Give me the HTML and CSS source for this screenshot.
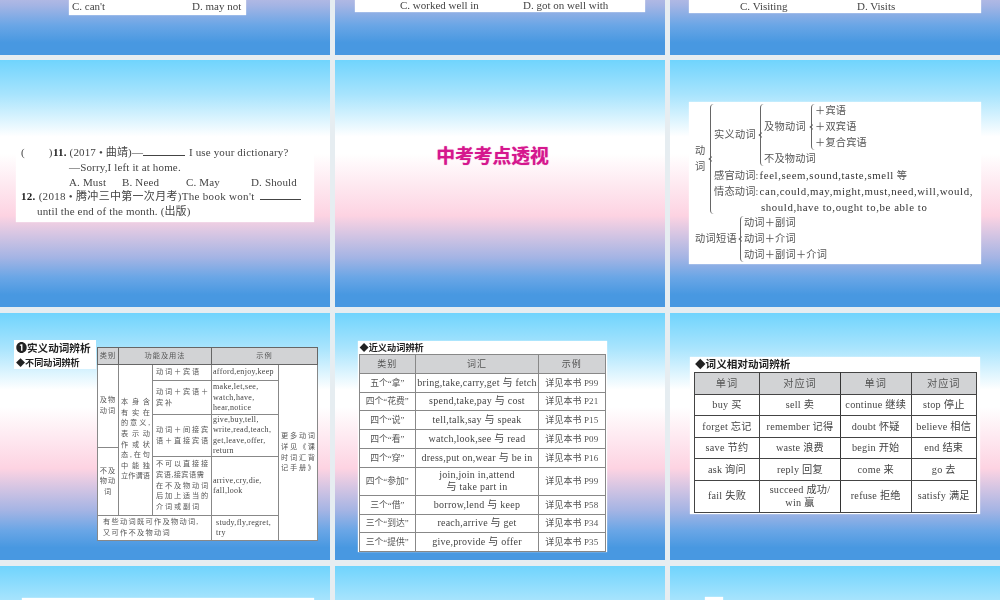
FILE: index.html
```html
<!DOCTYPE html>
<html lang="zh">
<head>
<meta charset="utf-8">
<title>动词</title>
<link rel="stylesheet" href="styles.css">
</head>
<body>
<main class="deck">
  <section class="slide end"><div class="sheet s1 opts"><span class="o1a">C. can't</span><span>D. may not</span></div></section>
  <section class="slide end"><div class="sheet s2 opts"><span class="o2a">C. worked well in</span><span>D. got on well with</span></div></section>
  <section class="slide end"><div class="sheet s3 opts"><span class="o3a">C. Visiting</span><span>D. Visits</span></div></section>

  <section class="slide mid">
    <div class="sheet quiz">
      <p class="q"><span class="paren">(<i class="gap"></i>)</span><b>11.</b><span>(2017 • 曲靖)—<u class="blank b1"></u> I use your dictionary?</span></p>
      <p class="q in1">—Sorry,I left it at home.</p>
      <p class="q in1 choices"><span class="c1">A. Must</span><span class="c2">B. Need</span><span class="c3">C. May</span><span>D. Should</span></p>
      <p class="q q4"><b>12.</b><span>(2018 • 腾冲三中第一次月考)The book won't <u class="blank b2"></u></span></p>
      <p class="q in2">until the end of the month. (出版)</p>
    </div>
  </section>
  <section class="slide mid"><h1 class="title">中考考点透视</h1></section>
  <section class="slide mid">
    <div class="sheet tree">
      <div class="branch">
        <div class="vert">动<br>词</div>
        <i class="brace b-main"></i>
        <div class="stack">
          <div class="branch">
            <div class="lab w-shi">实义动词</div>
            <i class="brace"></i>
            <div class="stack">
              <div class="branch">
                <div class="lab w-ji">及物动词</div>
                <i class="brace"></i>
                <div class="stack"><div class="ln">＋宾语</div><div class="ln">＋双宾语</div><div class="ln">＋复合宾语</div></div>
              </div>
              <div class="ln">不及物动词</div>
            </div>
          </div>
          <div class="ln">感官动词:<span class="w">feel,seem,sound,taste,smell</span> 等</div>
          <div class="ln">情态动词:<span class="w">can,could,may,might,must,need,will,would,</span></div>
          <div class="ln ind"><span class="w">should,have to,ought to,be able to</span></div>
        </div>
      </div>
      <div class="branch">
        <div class="lab">动词短语</div>
        <i class="brace"></i>
        <div class="stack"><div class="ln">动词＋副词</div><div class="ln">动词＋介词</div><div class="ln">动词＋副词＋介词</div></div>
      </div>
    </div>
  </section>

  <section class="slide row7">
    <div class="tag t7"><div class="tag-a"><span class="num">❶</span>实义动词辨析</div><div class="tag-b">◆不同动词辨析</div></div>
    <table class="tb tb7">
      <colgroup><col class="a1"><col class="a2"><col class="a3"><col class="a4"><col class="a5"></colgroup>
      <tr class="head r0"><th>类别</th><th colspan="2">功能及用法</th><th colspan="2">示例</th></tr>
      <tr class="r1"><td rowspan="3" class="cn">及物<br>动词</td><td rowspan="5" class="jus">本身含<br>有实在<br>的意义,<br>表示动<br>作或状<br>态,在句<br>中能独<br>立作谓语</td><td class="spr">动词＋宾语</td><td class="en">afford,enjoy,keep</td><td rowspan="6" class="jus">更多动词<br>详见《课<br>时词汇背<br>记手册》</td></tr>
      <tr class="r2"><td class="spr">动词＋宾语＋<br>宾补</td><td class="en">make,let,see,<br>watch,have,<br>hear,notice</td></tr>
      <tr class="r3"><td rowspan="2" class="spr">动词＋间接宾<br>语＋直接宾语</td><td rowspan="2" class="en">give,buy,tell,<br>write,read,teach,<br>get,leave,offer,<br>return</td></tr>
      <tr class="r3b"><td rowspan="2" class="cn">不及<br>物动<br>词</td></tr>
      <tr class="r4"><td class="spr">不可以直接接<br><span class="tight">宾语,接宾语需</span><br>在不及物动词<br>后加上适当的<br>介词或副词</td><td class="en">arrive,cry,die,<br>fall,look</td></tr>
      <tr class="r5"><td colspan="3" class="spr pad">有些动词既可作及物动词,<br>又可作不及物动词</td><td class="en pad">study,fly,regret,<br>try</td></tr>
    </table>
  </section>

  <section class="slide mid">
    <div class="sheet sheet8">
      <div class="tag-b tag8">◆近义动词辨析</div>
      <table class="tb tb8">
        <colgroup><col class="b1c"><col class="b2c"><col class="b3c"></colgroup>
        <tr class="head"><th>类别</th><th>词汇</th><th>示例</th></tr>
        <tr><td>五个“拿”</td><td>bring,take,carry,get 与 fetch</td><td>详见本书 P99</td></tr>
        <tr><td>四个“花费”</td><td>spend,take,pay 与 cost</td><td>详见本书 P21</td></tr>
        <tr><td>四个“说”</td><td>tell,talk,say 与 speak</td><td>详见本书 P15</td></tr>
        <tr><td>四个“看”</td><td>watch,look,see 与 read</td><td>详见本书 P09</td></tr>
        <tr><td>四个“穿”</td><td>dress,put on,wear 与 be in</td><td>详见本书 P16</td></tr>
        <tr class="tall"><td>四个“参加”</td><td>join,join in,attend<br>与 take part in</td><td>详见本书 P99</td></tr>
        <tr><td>三个“借”</td><td>borrow,lend 与 keep</td><td>详见本书 P58</td></tr>
        <tr><td>三个“到达”</td><td>reach,arrive 与 get</td><td>详见本书 P34</td></tr>
        <tr><td>三个“提供”</td><td>give,provide 与 offer</td><td>详见本书 P35</td></tr>
      </table>
    </div>
  </section>

  <section class="slide mid">
    <div class="sheet sheet9">
      <div class="tag-b tag9">◆词义相对动词辨析</div>
      <table class="tb tb9">
        <colgroup><col class="c1c"><col class="c2c"><col class="c3c"><col class="c4c"></colgroup>
        <tr class="head"><th>单词</th><th class="mid-line">对应词</th><th>单词</th><th>对应词</th></tr>
        <tr><td>buy 买</td><td class="mid-line">sell 卖</td><td>continue 继续</td><td>stop 停止</td></tr>
        <tr><td>forget 忘记</td><td class="mid-line">remember 记得</td><td>doubt 怀疑</td><td>believe 相信</td></tr>
        <tr><td>save 节约</td><td class="mid-line">waste 浪费</td><td>begin 开始</td><td>end 结束</td></tr>
        <tr><td>ask 询问</td><td class="mid-line">reply 回复</td><td>come 来</td><td>go 去</td></tr>
        <tr class="tall9"><td>fail 失败</td><td class="mid-line">succeed 成功/<br>win 赢</td><td>refuse 拒绝</td><td>satisfy 满足</td></tr>
      </table>
    </div>
  </section>

  <section class="slide"><div class="sheet peek1"></div></section>
  <section class="slide"></section>
  <section class="slide"><div class="sheet peek3"></div></section>
</main>
</body>
</html>
```
FILE: styles.css
```css
* { box-sizing: border-box; }
html, body { margin: 0; height: 600px; overflow: hidden; background: #e6edf1; }
body { font-family: "Liberation Serif", "Noto Sans CJK SC", serif; color: #333; }
p, h1 { margin: 0; }

.deck {
  display: grid;
  grid-template-columns: repeat(3, 330px);
  grid-auto-rows: 247.3px;
  gap: 5.5px 5px;
  margin-top: -192.8px;
}
.slide {
  display: flex;
  background: linear-gradient(180deg, #70d4fd 0%, #a8e4fd 14%, #ffffff 31%, #fff 38%, #fdd3e2 63%, #a4b4e4 80%, #6aa6e6 88%, #4898e1 95%, #4898e1 100%);
  overflow: hidden;
}
.end { align-items: flex-end; }
.mid { align-items: center; justify-content: center; }
.sheet { background: #fff; filter: blur(0.3px); box-shadow: 0 0 1px #fff; }

/* top row: ends of question cards */
.opts { display: flex; font-size: 11px; line-height: 14px; height: 24px; align-items: flex-end; color: #444; }
.s1 { margin: 0 0 40px 69px; width: 177px; padding: 0 0 2px 3px; }
.s2 { margin: 0 0 42.5px 20px; width: 290px; padding: 0 0 0 45px; }
.s3 { margin: 0 0 42px 19px; width: 292px; padding: 0 0 0 51px; }
.o1a { width: 120px; }
.o2a { width: 123px; }
.o3a { width: 117px; }

/* quiz */
.quiz { width: 298px; height: 79px; padding: 2px 5px 0; margin-top: -2px; font-size: 11px; line-height: 14.7px; color: #444; }
.q { display: flex; white-space: pre; letter-spacing: 0.15px; }
.q4 { letter-spacing: 0.3px; }
.paren { width: 32px; }
.gap { display: inline-block; width: 24px; }
.q b { color: #222; margin-right: 3px; }
.blank { display: inline-block; height: 11px; border-bottom: 1px solid #444; }
.b1 { width: 42px; margin-right: 1px; }
.b2 { width: 41px; margin-left: 2px; }
.in1 { padding-left: 48px; }
.in2 { padding-left: 16px; }
.c1 { width: 53px; }
.c2 { width: 64px; }
.c3 { width: 65px; }

/* title */
.title { font: 700 18.8px/24px "Noto Sans CJK SC", sans-serif; color: #d5178e; margin: -58px 15px 0 0; text-shadow: 0 0 1px #e54aa8, 0 0 3px #fff; }

/* verb tree */
.tree { width: 292px; height: 162px; padding: 1px 0 0 6px; font-size: 10.2px; line-height: 16px; color: #555; margin-top: -2px; }
.branch { display: flex; align-items: stretch; }
.stack { display: flex; flex-direction: column; white-space: nowrap; }
.ln { height: 16px; letter-spacing: 0.2px; }
.w { font-size: 10.8px; letter-spacing: 0.6px; color: #333; margin-left: 1px; }
.ind { padding-left: 46px; }
.vert { align-self: center; width: 10px; letter-spacing: 0; }
.lab { align-self: center; letter-spacing: 0.3px; white-space: nowrap; }
.w-shi { width: 43px; }
.w-ji { width: 44px; }
.brace { position: relative; display: block; flex: none; width: 4px; margin: 1px 0 1px 3px; border-left: 1px solid #666; border-radius: 4px 0 0 4px; }
.brace::before { content: ""; position: absolute; left: -3px; top: 50%; width: 3px; height: 3px; margin-top: -2px; border-top: 1px solid #666; border-left: 1px solid #666; transform: rotate(-45deg) translate(1px, 1px); }
.b-main { margin-left: 5px; }

/* tags */
.tag { background: #fff; color: #222; font-family: "Noto Sans CJK SC", sans-serif; font-weight: 700; filter: blur(0.3px); }
.t7 { width: 82px; height: 29px; margin: 27px 0 0 14px; padding-left: 2px; flex: none; }
.tag-a { font-size: 10.6px; line-height: 15px; white-space: nowrap; }
.num { font-size: 11px; }
.tag-b { font-family: "Noto Sans CJK SC", sans-serif; font-weight: 700; font-size: 9.1px; line-height: 14px; color: #222; white-space: nowrap; }

/* tables */
.tb { table-layout: fixed; border-collapse: collapse; background: #fff; font-size: 8px; text-align: center; color: #555; }
.tb th { background: #d2d3d5; font-weight: 400; padding: 0; border: 1px solid #666; letter-spacing: 1px; }
.tb td { padding: 0; border: 1px solid #888; overflow: hidden; }
.head th { color: #555; }

.row7 { align-items: flex-start; }
.tb7 { flex: none; margin: 34px 0 0 1px; width: 220px; height: 193px; font-size: 7.2px; line-height: 10.6px; border: 1.5px solid #555; filter: blur(0.25px); }
.a1 { width: 21px; } .a2 { width: 34px; } .a3 { width: 59px; } .a4 { width: 67px; } .a5 { width: 39px; }
.r0 { height: 17px; } .r1 { height: 16.6px; } .r2 { height: 33.7px; } .r3 { height: 33.3px; } .r3b { height: 8.7px; } .r4 { height: 58.3px; } .r5 { height: 25.7px; }
.tb7 .jus { text-align: justify; text-align-last: justify; padding: 0 2px; }
.tb7 .spr { text-align: left; letter-spacing: 1.8px; padding: 0 0 0 3px; white-space: nowrap; }
.tb7 .tight { letter-spacing: 0.5px; }
.tb7 .en { font-size: 8px; line-height: 10.3px; letter-spacing: 0.3px; text-align: left; padding: 0 0 0 1px; color: #444; white-space: nowrap; }
.tb7 .pad { padding-left: 4px; }
.tb7 .spr.pad { padding-left: 5px; letter-spacing: 1.3px; }
.tb7 .cn { padding: 0; letter-spacing: 1px; white-space: nowrap; }

.sheet8 { width: 249px; height: 211px; padding: 0 1px; margin: 21px 36px 0 0; }
.tag8 { height: 12.5px; padding-left: 1px; font-size: 9.2px; line-height: 12.5px; }
.tb8 { width: 246px; height: 198px; font-size: 8.8px; line-height: 12px; }
.tb8 td, .tb8 th { border-color: #888; }
.tb8 tr { height: 18.8px; }
.tb8 .tall { height: 28px; }
.tb8 td:nth-child(2) { font-size: 10px; letter-spacing: 0.25px; color: #444; white-space: nowrap; }
.tb8 td:nth-child(3) { font-size: 9px; letter-spacing: 0.1px; }
.tb8 .head th { font-size: 9px; }
.b1c { width: 56.5px; } .b2c { width: 123px; } .b3c { width: 66.5px; }

.sheet9 { width: 290px; height: 157px; padding: 0 3px 0 4px; margin-top: -1px; }
.tag9 { height: 14.5px; font-size: 10.6px; line-height: 14.5px; padding-left: 1px; }
.tb9 { width: 282px; height: 140px; font-size: 10.2px; line-height: 13.5px; border: 1px solid #333; letter-spacing: 0.25px; color: #444; }
.tb9 td, .tb9 th { border-color: #444; }
.tb9 tr { height: 21.4px; }
.tb9 .head { height: 22px; }
.tb9 .tall9 { height: 32px; }
.tb9 .mid-line { border-right: 1.5px solid #333; }
.c1c { width: 65px; } .c2c { width: 81px; } .c3c { width: 70.5px; } .c4c { width: 65.5px; }

.peek1 { width: 292px; height: 40px; margin: 32px 0 0 22px; }
.peek3 { width: 18px; height: 40px; margin: 31px 0 0 35px; }
```
